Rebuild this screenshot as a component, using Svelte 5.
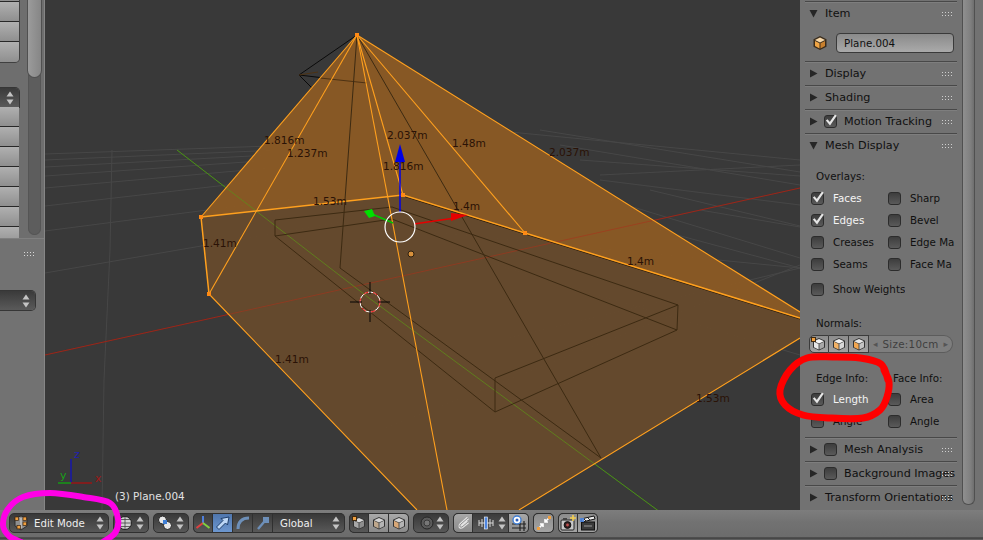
<script>
  const smooth = (p) => {
    let d = `M${p[0][0]},${p[0][1]}`;
    for (let i = 0; i < p.length - 1; i++) {
      const a = p[Math.max(i - 1, 0)], b = p[i], c = p[i + 1], e = p[Math.min(i + 2, p.length - 1)];
      d += ` C${b[0] + (c[0] - a[0]) / 6},${b[1] + (c[1] - a[1]) / 6} ${c[0] - (e[0] - b[0]) / 6},${c[1] - (e[1] - b[1]) / 6} ${c[0]},${c[1]}`;
    }
    return d;
  };
  const red = smooth([[888,380],[881,364],[860,358],[833,357],[807,358],[790,370],[780,390],[785,405],[803,415],[830,418],[863,418],[880,410],[887,397],[889,382],[884,370]]);
  const magenta = smooth([[21,542],[9,536],[3,525],[8,509],[23,497],[50,493],[83,497],[110,503],[118,519],[115,533],[103,542]]);

  const labels = [
    ['1.816m',264,144],['1.237m',287,157],['2.037m',387,139],['1.48m',452,147],['2.037m',549,156],
    ['1.816m',383,170],['1.53m',313,205],['1.4m',453,210],['1.41m',203,247],['1.4m',627,265],
    ['1.41m',275,363],['1.53m',696,402]
  ];
  const grid = [
    [45,154,270,146],[45,160,280,150],[45,167,270,155],[45,176,260,161],[45,188,270,168],[45,206,270,180],[45,231,300,198],[45,273,340,222],
    [112,150,110,250],[110,250,104,380],[104,380,102,510],
    [510,132,800,160],[540,130,800,172],[560,145,800,185],[580,160,800,176],[600,175,800,165],[600,180,800,205],
    [650,190,800,226],[700,210,800,227],[610,200,800,258],[640,225,800,268],[410,230,800,268],[480,260,800,355],
    [500,340,800,268],[380,430,800,265]
  ];
  const top = [
    [357,35,201,217],[357,35,209,294],[357,35,447,510],[357,35,403,195],[357,35,525,233],[357,35,800,312]
  ];
  const verts = [[357,35],[201,217],[209,294],[403,195],[525,233]];
  const inner = [
    [275,220,392,207],[392,207,678,305],[275,220,275,236],[275,236,392,219],[392,219,677,330],[275,236,495,412],
    [495,378,678,305],[678,305,677,330],[495,378,495,412],[495,412,677,330],
    [357,35,340,268],[357,35,601,458],[340,268,601,458]
  ];
  const leftRowsA = [0,1,2,3];
  const leftRowsB = [0,1,2,3,4,5,6];
</script>

{#snippet updown()}
  <svg class="ud" viewBox="0 0 8 14"><path d="M4 0.5 7.5 5.5H.5Z"/><path d="M4 13.5 7.5 8.5H.5Z"/></svg>
{/snippet}

{#snippet tri(open)}
  <svg class="tri" viewBox="0 0 9 9">
    {#if open}<path d="M0.5 1H8.5L4.5 8.5Z"/>{:else}<path d="M1 0.5V8.5L8.5 4.5Z"/>{/if}
  </svg>
{/snippet}

{#snippet grip()}<span class="grip"></span>{/snippet}

{#snippet cube(l, r, t)}
  <svg class="ic" viewBox="0 0 16 16">
    <path d="M8 2 14 4.8V11.5L8 14.5 2 11.5V4.8Z" fill="#333"/>
    <path d="M8 3 13 5.2 8 7.5 3 5.2Z" fill={t}/>
    <path d="M3 5.8 7.6 8V13.5L3 11.2Z" fill={l}/>
    <path d="M13 5.8 8.4 8V13.5L13 11.2Z" fill={r}/>
  </svg>
{/snippet}

{#snippet check(on, text)}
  <div class="chk">
    <span class="box">
      {#if on}<svg viewBox="0 0 13 13"><path d="M2.5 5.5 5.5 9 11 1" fill="none" stroke="#e6e6e6" stroke-width="2"/></svg>{/if}
    </span>
    <span class:on>{text}</span>
  </div>
{/snippet}

<div class="app">
  <div class="main">
    <aside class="left">
      <div class="lt">
        <div class="lcol">
          <div class="lbtns first">
            {#each leftRowsA as _}<div class="lb"></div>{/each}
          </div>
          <div class="ldrop ldt">{@render updown()}</div>
          <div class="lbtns">
            {#each leftRowsB as _}<div class="lb"></div>{/each}
          </div>
        </div>
        <div class="ltrack"><div class="lthumb"></div></div>
      </div>
      <div class="lbottom">
        <span class="lgrip"></span>
        <div class="ldrop ldb">{@render updown()}</div>
      </div>
    </aside>

    <div class="view">
      <svg class="scene" viewBox="45 0 755 510">
        <rect x="45" y="0" width="755" height="510" fill="#393939"/>
        <g stroke="#474747" stroke-width="1">
          {#each grid as g}<line x1={g[0]} y1={g[1]} x2={g[2]} y2={g[3]}/>{/each}
        </g>
        <line x1="45" y1="355" x2="800" y2="188" stroke="#7d1c1c"/>
        <polyline points="177,150 369,298 660,512" fill="none" stroke="#1f7a1f"/>
        <path d="M357,35 299,75 312,88M299,75 367,83" fill="none" stroke="#0a0a0a"/>

        <polygon points="201,217 403,195 525,233 802,319 802,337 519,510 417,510 209,294" fill="#664a2d" fill-opacity=".96"/>
        <polygon points="357,35 802,313 802,319 525,233 403,195 201,217" fill="#8a5a24" fill-opacity=".96"/>

        <line x1="45" y1="355" x2="800" y2="188" stroke="#a5341c" stroke-opacity=".6"/>
        <polyline points="177,150 369,298 660,512" fill="none" stroke="#5f8a1a" stroke-opacity=".8"/>
        <path d="M318,72 299,75M320,78 367,83" fill="none" stroke="#4d3213"/>

        <g stroke="#3c2a12" stroke-width="1">
          {#each inner as g}<line x1={g[0]} y1={g[1]} x2={g[2]} y2={g[3]}/>{/each}
        </g>

        <path d="M403,196 525,234 800,319" fill="none" stroke="#2a1b0a"/>
        <g stroke="#ffa01e" stroke-width="1.1" fill="none">
          {#each top as g}<line x1={g[0]} y1={g[1]} x2={g[2]} y2={g[3]}/>{/each}
          <path d="M209,294 417,510M519,510 800,338"/>
          <path d="M201,217 403,195 525,233 800,318M201,217 209,294" stroke-width="1.5"/>
        </g>
        {#each verts as v}<rect x={v[0] - 2} y={v[1] - 2} width="4" height="4" fill="#ff8a14"/>{/each}

        <line x1="400" y1="212" x2="400" y2="160" stroke="#0000e6" stroke-width="1.5"/>
        <path d="M400,144 405,162H395Z" fill="#0000e6"/>
        <line x1="414" y1="224" x2="455" y2="218" stroke="#e60000" stroke-width="1.5"/>
        <path d="M468,215 451,221 451,213Z" fill="#e60000"/>
        <line x1="393" y1="223" x2="372" y2="214" stroke="#00c800" stroke-width="1.5"/>
        <path d="M364,211 372,209 375,216 369,218Z" fill="#00e000"/>
        <circle cx="400" cy="227" r="15" fill="none" stroke="#fff" stroke-width="1.2"/>
        <circle cx="411" cy="254" r="3" fill="#d8913c" stroke="#2d2010"/>

        <circle cx="370" cy="302" r="10" fill="none" stroke="#fff" stroke-width="1"/>
        <circle cx="370" cy="302" r="10" fill="none" stroke="#e11" stroke-width="1" stroke-dasharray="5 5"/>
        <path d="M350,302 H362 M378,302 H390 M370,282 V294 M370,310 V322" stroke="#050505" stroke-width="1"/>

        <g class="m">
          {#each labels as l}<text x={l[1]} y={l[2]}>{l[0]}</text>{/each}
        </g>

        <path d="M71,483V459" stroke="#1414b4" stroke-width="1.4"/>
        <path d="M71,483H92" stroke="#a01414" stroke-width="1.4"/>
        <path d="M71,483H58" stroke="#14a014" stroke-width="1.4"/>
        <text class="ax" x="74" y="458" fill="#2020b0">z</text>
        <text class="ax" x="95" y="482" fill="#a01818">x</text>
        <text class="ax" x="60" y="479" fill="#18a018">y</text>
        <text class="obj" x="115" y="500">(3) Plane.004</text>
      </svg>
    </div>

    <aside class="right">
      <div class="panel">
        <div class="ph">{@render tri(true)}<span>Item</span>{@render grip()}</div>
        <div class="name">
          <svg class="ic nameic" viewBox="0 0 16 16">
            <path d="M8 1 14.5 4.2V11.8L8 15 1.5 11.8V4.2Z" fill="#3a2c1c"/>
            <path d="M8 2.5 13 5 8 7.4 3 5Z" fill="#f6d7a8"/>
            <path d="M3 5.9 7.5 8.2V13.4L3 11.1Z" fill="#f0a545"/>
            <path d="M13 5.9 8.5 8.2V13.4L13 11.1Z" fill="#c9802d"/>
          </svg>
          <div class="field">Plane.004</div>
        </div>
        <div class="ph">{@render tri(false)}<span>Display</span>{@render grip()}</div>
        <div class="ph">{@render tri(false)}<span>Shading</span>{@render grip()}</div>
        <div class="ph">{@render tri(false)}<span class="box hbox"><svg viewBox="0 0 13 13"><path d="M2.5 5.5 5.5 9 11 1" fill="none" stroke="#e6e6e6" stroke-width="2"/></svg></span><span>Motion Tracking</span>{@render grip()}</div>
        <div class="ph">{@render tri(true)}<span>Mesh Display</span>{@render grip()}</div>

        <div class="body">
          <div class="lab">Overlays:</div>
          <div class="grid">
            {@render check(true, 'Faces')}{@render check(false, 'Sharp')}
            {@render check(true, 'Edges')}{@render check(false, 'Bevel')}
            {@render check(false, 'Creases')}{@render check(false, 'Edge Ma')}
            {@render check(false, 'Seams')}{@render check(false, 'Face Ma')}
          </div>
          <div class="weights">{@render check(false, 'Show Weights')}</div>
          <div class="lab normals">Normals:</div>
          <div class="nbar">
            <span class="nb nb1">{@render cube('#e8e8e8','#a8a8a8','#f4f4f4')}<i class="vdot"></i></span>
            <span class="nb">{@render cube('#f2b266','#d8d8d8','#f4f4f4')}</span>
            <span class="nb">{@render cube('#f2a650','#c4c4c4','#e8e8e8')}</span>
            <span class="size"><em>◂</em><b>Size:10cm</b><em>▸</em></span>
          </div>
          <div class="grid info">
            <div class="lab">Edge Info:</div><div class="lab">Face Info:</div>
          </div>
          <div class="grid">
            {@render check(true, 'Length')}{@render check(false, 'Area')}
            {@render check(false, 'Angle')}{@render check(false, 'Angle')}
          </div>
        </div>

        <div class="ph">{@render tri(false)}<span class="box hbox"></span><span>Mesh Analysis</span>{@render grip()}</div>
        <div class="ph">{@render tri(false)}<span class="box hbox"></span><span>Background Images</span>{@render grip()}</div>
        <div class="ph">{@render tri(false)}<span>Transform Orientations</span>{@render grip()}</div>
      </div>
      <div class="rtrack"><div class="rthumb"></div></div>
    </aside>
  </div>

  <footer class="bar">
    <div class="dd edit">
      <svg class="ic" viewBox="0 0 16 16">
        <path d="M2 3 8 1 14 3V11L8 15 2 11Z" fill="#8f8f8f" stroke="#2d2d2d"/>
        <path d="M8 3V13" stroke="#dcdcdc"/>
        <g fill="#f0a040" stroke="#3a2410" stroke-width=".7">
          <rect x="2" y="2" width="3.4" height="3.4"/><rect x="10" y="2" width="3.4" height="3.4"/><rect x="10" y="7" width="3.4" height="3.4"/><rect x="4" y="10.5" width="3.4" height="3.4"/>
        </g>
      </svg>
      <span>Edit Mode</span>{@render updown()}
    </div>
    <div class="dd sm globe">
      <svg class="ic" viewBox="0 0 16 16">
        <circle cx="8" cy="8" r="6.5" fill="#d2d2d2" stroke="#1d1d1d"/>
        <path d="M8 1.5V14.5M1.5 8H14.5M3 4.5H13M3 11.5H13" stroke="#444" fill="none" stroke-width=".8"/>
      </svg>
      {@render updown()}
    </div>
    <div class="dd sm pivot">
      <svg class="ic" viewBox="0 0 16 16">
        <circle cx="5.5" cy="5" r="4" fill="#e8e8e8" stroke="#222"/>
        <circle cx="10.5" cy="10.5" r="4" fill="#e8e8e8" stroke="#222"/>
        <rect x="6" y="5" width="4" height="4" fill="#3f7fd6"/>
      </svg>
      {@render updown()}
    </div>
    <div class="grp">
      <span class="ib dark">
        <svg class="ic" viewBox="0 0 16 16">
          <path d="M8 8V1" stroke="#4f7fdc" stroke-width="2"/><path d="M8 8 1.5 13" stroke="#e04040" stroke-width="2"/><path d="M8 8 14.5 13" stroke="#80d040" stroke-width="2"/>
        </svg>
      </span>
      <span class="ib active">
        <svg class="ic" viewBox="0 0 16 16"><path d="M14 2 6 3.5 8 5.5 1.5 12 4 14.5 10.5 8 12.5 10Z" fill="#bcd6f5" stroke="#1d3d6a"/></svg>
      </span>
      <span class="ib dark">
        <svg class="ic" viewBox="0 0 16 16"><path d="M3 14C3 7 7 3 14 3" fill="none" stroke="#6d8fb8" stroke-width="3"/></svg>
      </span>
      <span class="ib dark">
        <svg class="ic" viewBox="0 0 16 16"><path d="M3 14 9 7" stroke="#6d8fb8" stroke-width="2.4"/><rect x="8" y="2" width="6" height="6" fill="#6d8fb8"/></svg>
      </span>
      <div class="dd global"><span>Global</span>{@render updown()}</div>
    </div>
    <div class="grp">
      <span class="ib dark">{@render cube('#a8a8a8','#8e8e8e','#d8d8d8')}<i class="vdot d2"></i></span>
      <span class="ib light">{@render cube('#bfa88d','#b4b4b4','#d4d4d4')}</span>
      <span class="ib light">{@render cube('#d8a878','#b4b4b4','#d4d4d4')}</span>
    </div>
    <div class="dd sm prop">
      <svg class="ic" viewBox="0 0 16 16"><circle cx="8" cy="8" r="6" fill="#5b5b5b" stroke="#262626"/><circle cx="8" cy="8" r="3" fill="#777" stroke="#3a3a3a"/></svg>
      {@render updown()}
    </div>
    <div class="grp">
      <span class="ib light">
        <svg class="ic" viewBox="0 0 16 16"><path d="M13 3 6 9C4 11 5 13 7 12L13 7" fill="none" stroke="#e4e4e4" stroke-width="3"/><path d="M13 3 6 9C4 11 5 13 7 12L13 7" fill="none" stroke="#555" stroke-width=".6"/></svg>
      </span>
      <span class="ib dark wide">
        <svg class="ic" viewBox="0 0 16 16"><path d="M1 5V11M4 4V12M12 4V12M15 5V11M1 8H15" stroke="#d8d8d8"/><rect x="6.5" y="2" width="3" height="12" fill="#4f86e0" stroke="#fff" stroke-width=".6"/></svg>
        {@render updown()}
      </span>
      <span class="ib light">
        <svg class="ic" viewBox="0 0 16 16"><path d="M1 9H15M1 13H15M9 6V16M13 6V16" stroke="#222" stroke-width="1.2"/><circle cx="6" cy="5" r="4" fill="#fff" stroke="#3f7fd6" stroke-width="1.4"/><circle cx="6" cy="5" r="1.5" fill="#2a5fc0"/></svg>
      </span>
    </div>
    <div class="grp">
      <span class="ib lighter w21">
        <svg class="ic" viewBox="0 0 16 16"><path d="M13 3 9 7M9 4V7H12M3 13 7 9M7 12V9H4" stroke="#fff" stroke-width="1.6" fill="none"/><rect x="12" y="1" width="3" height="3" fill="#f0a040"/><rect x="1" y="12" width="3" height="3" fill="#f0a040"/></svg>
      </span>
    </div>
    <div class="grp">
      <span class="ib lighter">
        <svg class="ic" viewBox="0 0 16 16"><rect x="1" y="5" width="13" height="10" rx="1" fill="#c8c8c8" stroke="#222"/><rect x="3" y="3" width="4" height="2" fill="#444"/><circle cx="7.5" cy="10" r="3.4" fill="#302020" stroke="#111"/><circle cx="7.5" cy="10" r="1.4" fill="#c05050"/><path d="M13 0V6M10 3H16" stroke="#f5d050" stroke-width="1.6"/></svg>
      </span>
      <span class="ib lighter">
        <svg class="ic" viewBox="0 0 16 16"><rect x="1.5" y="7" width="13" height="8" fill="#3a3a3a" stroke="#111"/><path d="M1 4 14 1 15 4 2 7Z" fill="#eee" stroke="#111"/><path d="M4 4 6 6M8 3 10 5" stroke="#222"/><path d="M4 11H12" stroke="#9a9a9a"/><rect x="0" y="3" width="4" height="4" fill="#4f86e0" opacity=".9"/></svg>
      </span>
    </div>
  </footer>

  <svg class="marks" viewBox="0 0 983 540">
    <path d={red} fill="none" stroke="#ff0000" stroke-width="7" stroke-linecap="round"/>
    <path d={magenta} fill="none" stroke="#ff00e6" stroke-width="6" stroke-linecap="round"/>
  </svg>
</div>

<style>
  :global(body) { margin: 0; background: #393939; }
  .app {
    position: relative; width: 983px; height: 540px; overflow: hidden;
    display: flex; flex-direction: column;
    font: 11.2px "DejaVu Sans", "Liberation Sans", sans-serif; color: #101010;
  }
  .main { display: flex; height: 510px; }

  .left { width: 45px; flex: none; display: flex; flex-direction: column; background: #6f6f6f; position: relative; }
  .lt { height: 238px; display: flex; overflow: hidden; background: #6e6e6e; flex: none; }
  .lcol { width: 19px; flex: none; }
  .lbtns { display: flex; flex-direction: column; }
  .lbtns.first { margin-top: -18px; border-bottom-right-radius: 4px; overflow: hidden; box-shadow: 0 0 0 1px #404040; }
  .lb { height: 20px; box-sizing: border-box; background: linear-gradient(#b0b0b0, #8f8f8f); border-bottom: 1px solid #282828; }
  .lbtns.first .lb:last-child { border-bottom: 0; }
  .ldrop {
    display: flex; align-items: center; justify-content: flex-end; box-sizing: border-box;
    background: linear-gradient(#3a3a3a, #5a5a5a); height: 19px; border-radius: 0 4px 4px 0; padding-right: 5px;
    box-shadow: 0 0 0 1px #363636;
  }
  .ldt { margin-top: 26px; border-bottom-right-radius: 0; }
  .ltrack { width: 13px; margin: 0 0 3px 9px; background: #5d5d5d; border-radius: 0 0 7px 7px; box-shadow: inset 0 0 0 1px #555; }
  .lthumb { height: 77px; border-radius: 0 0 7px 7px; background: linear-gradient(90deg, #9b9b9b, #868686); box-shadow: 0 0 0 1px #505050; }
  .lbottom { flex: 1; position: relative; background: #727272; border-top: 1px solid #7f7f7f; padding-top: 52px; }
  .lgrip {
    position: absolute; left: 23px; top: 12px; width: 11px; height: 6px;
    background: radial-gradient(circle, #d8d8d8 0.7px, transparent 1px) 0 0 / 3px 3px;
  }
  .ldb { width: 35px; }
  .left::after { content: ""; position: absolute; right: 0; top: 0; bottom: 0; width: 1px; background: #868686; }

  .view { width: 755px; flex: none; }
  .scene { display: block; width: 755px; height: 510px; }
  .m text { font-size: 10.6px; fill: #2a1206; }
  .ax { font-size: 11px; }
  .obj { font-size: 10.4px; fill: #e2e2e2; }

  .right { flex: 1; display: flex; background: #727272; }
  .panel { width: 157px; padding-left: 5px; flex: none; padding-top: 1px; box-sizing: content-box; }
  .ph {
    position: relative; height: 24px; box-sizing: border-box; width: 152px; display: flex; align-items: center; gap: 3px;
    border-top: 1px solid #484848; padding-left: 4px; white-space: nowrap;
    box-shadow: inset 0 1px 0 #7e7e7e;
  }
  .tri { width: 9px; height: 9px; flex: none; margin-right: 4px; fill: #262626; }
  .grip {
    position: absolute; right: 5px; top: 9px; width: 11px; height: 6px;
    background: radial-gradient(circle, #cfcfcf 0.7px, transparent 1px) 0 0 / 3px 3px;
  }
  .box {
    display: inline-block; width: 13px; height: 13px; flex: none; box-sizing: border-box; border-radius: 3px;
    background: linear-gradient(#3d3d3d, #5a5a5a); border: 1px solid #2c2c2c; position: relative;
  }
  .box svg { position: absolute; left: -1px; top: -2px; width: 14px; height: 14px; }
  .hbox { margin-right: 4px; margin-left: -1px; }
  .name { height: 36px; width: 152px; display: flex; align-items: center; font-size: 10.3px; }
  .ic { width: 16px; height: 16px; flex: none; display: block; }
  .nameic { margin-left: 7px; }
  .field {
    margin-left: 8px; width: 118px; height: 20px; box-sizing: border-box; border: 1px solid #3a3a3a; border-radius: 4px;
    background: linear-gradient(#8a8a8a, #aaaaaa); padding-left: 7px; line-height: 18px;
  }
  .body { padding: 8px 0 0 6px; height: 280px; box-sizing: border-box; font-size: 10.3px; }
  .lab { height: 22px; line-height: 22px; padding-left: 5px; white-space: nowrap; }
  .grid { display: grid; grid-template-columns: 77px 70px; grid-auto-rows: 22px; }
  .chk { display: flex; align-items: center; gap: 9px; white-space: nowrap; overflow: hidden; }
  .on { color: #f4f4f4; }
  .weights { margin-top: 3px; height: 22px; display: flex; }
  .normals { margin-top: 12px; }
  .nbar { margin: 1px 0 0 -2px; display: flex; height: 18px; width: 144px; }
  .nb {
    width: 20px; box-sizing: border-box; background: linear-gradient(#8c8c8c, #a2a2a2); border: 1px solid #3b3b3b; border-left-width: 0;
    display: flex; align-items: center; justify-content: center; position: relative;
  }
  .nb1 { border-left-width: 1px; border-radius: 5px 0 0 5px; }
  .vdot { position: absolute; left: 2px; top: 2px; width: 3px; height: 3px; background: #f0a040; outline: 1px solid #402a10; }
  .d2 { left: 3px; top: 3px; }
  .size {
    flex: 1; display: flex; align-items: center; justify-content: space-between; padding: 0 4px;
    background: #7e7e7e; border: 1px solid #5c5c5c; border-left: 0; border-radius: 0 9px 9px 0; color: #3c3c3c;
  }
  .size b { font-weight: normal; color: #3e3e3e; letter-spacing: .3px; }
  .size em { font-style: normal; font-size: 9px; color: #555; }
  .info { margin-top: 14px; margin-bottom: -1px; }

  .rtrack { margin-left: 1px; width: 12px; }
  .rthumb {
    height: 505px; border-radius: 0 0 6px 6px; box-sizing: border-box; margin-left: -1px; width: 13px;
    background: linear-gradient(90deg, #8f8f8f, #7f7f7f 70%, #6e6e6e); border: 1px solid #505050; border-top: 0;
  }

  .bar {
    height: 30px; flex: none; display: flex; align-items: flex-start; gap: 4px; box-sizing: border-box;
    padding: 3px 0 0 9px; background: linear-gradient(#7d7d7d 0, #727272 12px, #6c6c6c 27px, #303030 28px, #5e5e5e 29px);
    font-size: 10.2px;
  }
  .dd {
    height: 20px; box-sizing: border-box; display: flex; align-items: center; color: #eee; padding: 0 4px 0 5px;
    background: linear-gradient(#383838, #585858); border: 1px solid #303030; border-radius: 5px;
  }
  .dd > span { flex: 1; white-space: nowrap; }
  .edit { width: 100px; gap: 3px; padding-left: 3px; }
  .edit > span { padding-left: 2px; }
  .sm { justify-content: space-between; }
  .globe, .pivot { width: 36px; padding-left: 3px; }
  .prop { width: 36px; }
  .global { width: 72px; border-radius: 0 5px 5px 0; padding-left: 7px; border-left: 0; }
  .grp { display: flex; height: 20px; border-radius: 5px; overflow: hidden; box-shadow: inset 0 0 0 1px #303030; }
  .ib {
    width: 20px; height: 20px; box-sizing: border-box; display: flex; align-items: center; justify-content: center; position: relative;
    border: 1px solid #303030; border-left-width: 0;
  }
  .grp > .ib:first-child { border-left-width: 1px; border-radius: 5px 0 0 5px; }
  .grp > .ib:last-child { border-radius: 0 5px 5px 0; }
  .grp > .ib:only-child { border-radius: 5px; }
  .dark { background: linear-gradient(#3c3c3c, #585858); }
  .active { background: linear-gradient(#4f76ad, #6d97d0); }
  .light { background: linear-gradient(#a8a8a8, #8a8a8a); }
  .lighter { background: linear-gradient(#8c8c8c, #a4a4a4); }
  .wide { width: 36px; gap: 4px; padding-left: 3px; }
  .w21 { width: 21px; }
  .ud { width: 8px; height: 14px; flex: none; fill: #c4c4c4; }

  .marks { position: absolute; left: 0; top: 0; width: 983px; height: 540px; pointer-events: none; }
</style>
